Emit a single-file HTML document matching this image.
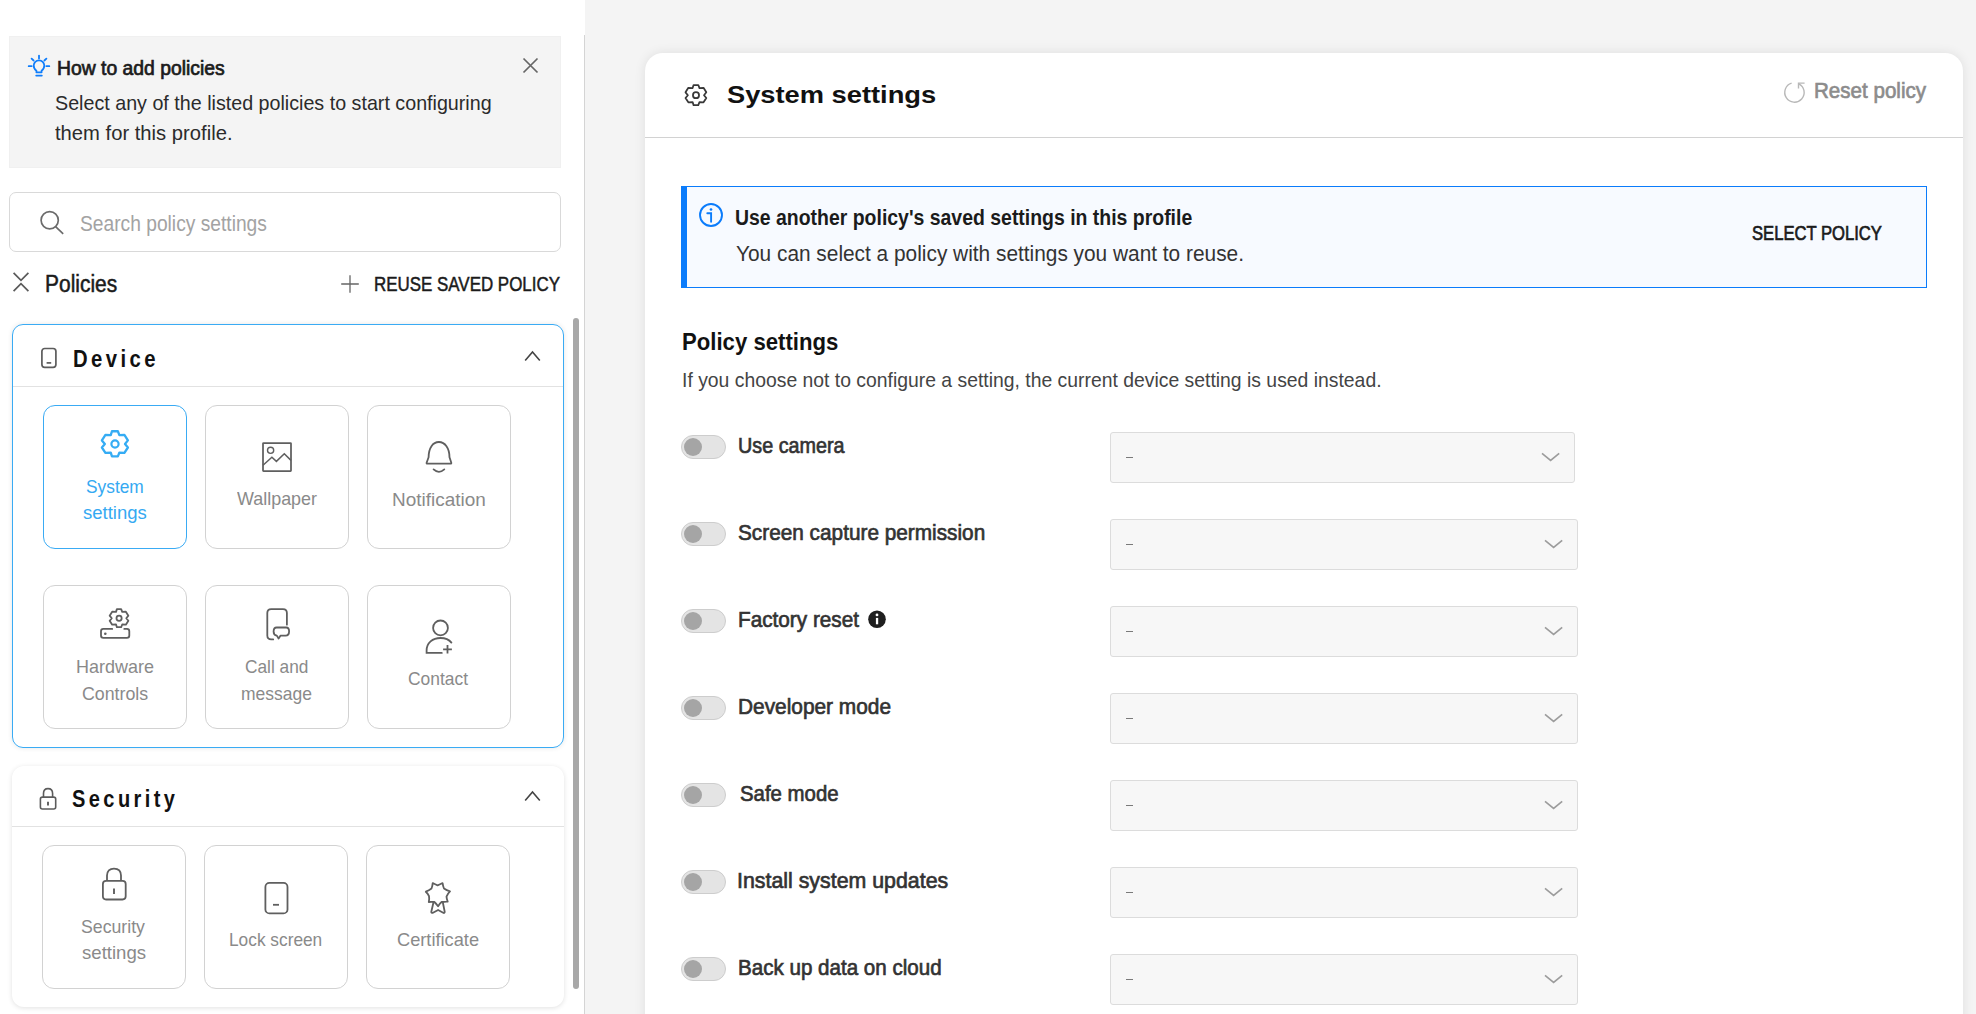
<!DOCTYPE html>
<html><head><meta charset="utf-8"><style>
html,body{margin:0;padding:0}
body{width:1976px;height:1014px;overflow:hidden;position:relative;background:#f4f4f4;font-family:"Liberation Sans",sans-serif}
.abs{position:absolute;box-sizing:content-box}
.ic{position:absolute;overflow:visible}
.t{position:absolute;white-space:nowrap;transform-origin:0 0}
</style></head><body>
<div class="abs" style="left:0;top:0;width:585px;height:1014px;background:#fff"></div>
<div class="abs" style="left:584px;top:35px;width:1px;height:979px;background:#d4d4d4"></div>
<div class="abs" style="left:9px;top:36px;width:552px;height:132px;background:#f4f4f4;box-shadow:inset 0 0 0 1px #f0f0f0"></div>
<svg class="ic" style="left:28px;top:55px;width:22px;height:22px" viewBox="0 0 22 22" ><g fill="none" stroke="#0f7dfb" stroke-width="1.8" stroke-linecap="round" stroke-linejoin="round"><path d="M8.4 17.3V15.7C6.8 14.6 5.7 12.7 5.7 10.6A5.3 5.3 0 0 1 16.3 10.6C16.3 12.7 15.2 14.6 13.6 15.7V17.3Z"/><path d="M8.2 20.6H13.8"/><path d="M11 0.6V3.4M3.6 3.6L5.6 5.5M18.4 3.6L16.4 5.5M0.7 11.2H3.6M18.4 11.2H21.3"/></g></svg>
<svg class="ic" style="left:520px;top:55px;width:22px;height:22px" viewBox="0 0 22 22" ><path d="M3.5 3.5L17.5 17.5M17.5 3.5L3.5 17.5" stroke="#666" stroke-width="1.7" fill="none"/></svg>
<div class="abs" style="left:9px;top:192px;width:550px;height:58px;border:1px solid #d9d9d9;border-radius:7px;background:#fff"></div>
<svg class="ic" style="left:38px;top:209px;width:28px;height:28px" viewBox="0 0 28 28" ><g fill="none" stroke="#6b6b6b" stroke-width="1.7"><circle cx="11.7" cy="11.2" r="8.6"/><path d="M17.6 17.7L25.2 24.8"/></g></svg>
<svg class="ic" style="left:11px;top:270px;width:20px;height:24px" viewBox="0 0 20 24" ><g fill="none" stroke="#5a5a5a" stroke-width="1.7"><path d="M2.6 2.9L10 10.4L17.4 2.9M2.6 21.2L10 13.6L17.4 21.2"/></g></svg>
<svg class="ic" style="left:338px;top:272px;width:24px;height:24px" viewBox="0 0 24 24" ><path d="M12 3.2V20.8M3.2 12H20.8" stroke="#666" stroke-width="1.3" fill="none"/></svg>
<div class="abs card" style="left:12px;top:324px;width:550px;height:422px;border:1px solid #3aabf4;border-radius:11px;box-shadow:0 0 5px rgba(0,0,0,0.10)"></div>
<div class="abs" style="left:13px;top:386px;width:550px;height:1px;background:#e2e2e2"></div>
<svg class="ic" style="left:38px;top:345px;width:22px;height:26px" viewBox="0 0 22 26" ><g fill="none" stroke="#5c5c5c" stroke-width="1.7"><rect x="3.9" y="3.5" width="14" height="18.8" rx="2.8"/><path d="M8.6 17.9H13.2"/></g></svg>
<svg class="ic" style="left:522px;top:346px;width:22px;height:20px" viewBox="0 0 22 20" ><path d="M3.2 14.5L10.5 6L17.8 14.5" stroke="#444" stroke-width="1.6" fill="none"/></svg>
<div class="abs" style="left:43px;top:405px;width:142px;height:142px;border:1px solid #3aabf4;border-radius:12px;background:#fff"></div>
<div class="abs" style="left:205px;top:405px;width:142px;height:142px;border:1px solid #d2d2d2;border-radius:12px;background:#fff"></div>
<div class="abs" style="left:367px;top:405px;width:142px;height:142px;border:1px solid #d2d2d2;border-radius:12px;background:#fff"></div>
<div class="abs" style="left:43px;top:585px;width:142px;height:142px;border:1px solid #d2d2d2;border-radius:12px;background:#fff"></div>
<div class="abs" style="left:205px;top:585px;width:142px;height:142px;border:1px solid #d2d2d2;border-radius:12px;background:#fff"></div>
<div class="abs" style="left:367px;top:585px;width:142px;height:142px;border:1px solid #d2d2d2;border-radius:12px;background:#fff"></div>
<div class="abs card" style="left:12px;top:766px;width:552px;height:241px;border-radius:12px;background:#fff;box-shadow:0 1px 5px rgba(0,0,0,0.12)"></div>
<div class="abs" style="left:12px;top:826px;width:552px;height:1px;background:#e2e2e2"></div>
<div class="abs" style="left:42px;top:845px;width:142px;height:142px;border:1px solid #d2d2d2;border-radius:12px;background:#fff"></div>
<div class="abs" style="left:204px;top:845px;width:142px;height:142px;border:1px solid #d2d2d2;border-radius:12px;background:#fff"></div>
<div class="abs" style="left:366px;top:845px;width:142px;height:142px;border:1px solid #d2d2d2;border-radius:12px;background:#fff"></div>
<div class="abs" style="left:573px;top:318px;width:6px;height:671px;border-radius:3px;background:#a8a8a8"></div>
<svg class="ic" style="left:101px;top:430px;width:28px;height:28px" viewBox="0 0 28 28" ><path d="M10.95 1.27 L16.87 1.27 L18.35 5.10 L23.40 4.80 L26.90 10.40 L24.00 14.00 L26.90 17.50 L23.40 22.90 L18.35 22.60 L16.87 26.40 L10.95 26.40 L9.77 22.60 L4.44 22.90 L0.90 17.50 L3.85 14.00 L0.90 10.40 L4.44 4.80 L9.77 5.10Z" fill="none" stroke="#35acf4" stroke-width="2.3" stroke-linejoin="round"/><circle cx="14" cy="14" r="3.6" fill="none" stroke="#35acf4" stroke-width="2.2"/></svg>
<svg class="ic" style="left:262px;top:442px;width:30px;height:30px" viewBox="0 0 30 30" ><g fill="none" stroke="#5f5f5f" stroke-width="1.75"><rect x="1" y="1" width="28" height="28" rx="0.5"/><circle cx="8.6" cy="8.3" r="3.1" stroke-width="1.4"/><path d="M1 23.2L9.9 15.2L14.4 19.4L22.3 11.7L29 18.4" stroke-width="1.5" stroke-linejoin="miter"/></g></svg>
<svg class="ic" style="left:424px;top:439px;width:30px;height:36px" viewBox="0 0 30 36" ><g fill="none" stroke="#5f5f5f" stroke-width="1.8" stroke-linejoin="round" stroke-linecap="round"><path d="M4.6 18.3C4.6 9 8.8 3 14.9 3C21 3 25.5 9 25.5 18.3L27.3 23.8C27.5 24.4 27.2 24.7 26.6 24.7H3.3C2.7 24.7 2.4 24.4 2.6 23.8Z"/><path d="M9.6 30.4C11 31.7 12.8 32.8 14.9 32.8C17 32.8 18.8 31.7 20.3 30.4"/></g></svg>
<svg class="ic" style="left:98px;top:605px;width:36px;height:36px" viewBox="0 0 36 36" ><g transform="translate(11,3.2) scale(0.72)"><path d="M10.95 1.27 L16.87 1.27 L18.35 5.10 L23.40 4.80 L26.90 10.40 L24.00 14.00 L26.90 17.50 L23.40 22.90 L18.35 22.60 L16.87 26.40 L10.95 26.40 L9.77 22.60 L4.44 22.90 L0.90 17.50 L3.85 14.00 L0.90 10.40 L4.44 4.80 L9.77 5.10Z" fill="none" stroke="#5f5f5f" stroke-width="2.5" stroke-linejoin="round"/><circle cx="14" cy="14" r="3.6" fill="none" stroke="#5f5f5f" stroke-width="2.5"/></g><g fill="none" stroke="#5f5f5f" stroke-width="1.8" stroke-linecap="round"><path d="M14.2 23.9H5.3C3.6 23.9 3 24.6 3 26.3V30.6C3 32.3 3.6 32.9 5.3 32.9H29C30.7 32.9 31.3 32.3 31.3 30.6V26.3C31.3 24.6 30.7 23.9 29 23.9H26.3"/></g><circle cx="7.3" cy="28.8" r="1.3" fill="#5f5f5f"/></svg>
<svg class="ic" style="left:264px;top:606px;width:30px;height:36px" viewBox="0 0 30 36" ><g fill="none" stroke="#5f5f5f" stroke-width="1.8" stroke-linecap="round" stroke-linejoin="round"><path d="M9.2 33.4H7.2C4.7 33.4 3.3 32 3.3 29.5V7.1C3.3 4.6 4.7 3.2 7.2 3.2H19C21.5 3.2 22.9 4.6 22.9 7.1V18.7"/><path d="M12.6 21.5H22.2C24.1 21.5 25.1 23 25.1 25.3C25.1 27.6 23.9 29.6 21.6 29.6H16.6L14.6 32.6L12.8 29.6C10.7 29.2 9.6 27.6 9.6 25.4C9.6 23.1 10.6 21.5 12.6 21.5Z"/></g></svg>
<svg class="ic" style="left:424px;top:617px;width:30px;height:38px" viewBox="0 0 30 38" ><g fill="none" stroke="#5f5f5f" stroke-width="1.8" stroke-linecap="round"><circle cx="16.5" cy="10.9" r="7.4"/><path d="M17.8 35.9H2.6V33.5C2.6 26 8.6 21 16.5 21C21.3 21 25 22.5 27.4 25.6"/><path d="M19.1 32.4H27.9M23.5 28V36.6" stroke-linecap="butt"/></g></svg>
<svg class="ic" style="left:99px;top:865px;width:30px;height:38px" viewBox="0 0 30 38" ><g fill="none" stroke="#5f5f5f" stroke-width="1.8"><rect x="3.9" y="15.9" width="22.8" height="18.6" rx="3.2"/><path d="M8 15.9V10.6C8 6.3 10.6 3.6 15 3.6C19.4 3.6 22 6.3 22 10.6V15.9"/><path d="M15 23.4V28.9" stroke-width="1.9"/></g></svg>
<svg class="ic" style="left:262px;top:880px;width:28px;height:36px" viewBox="0 0 28 36" ><g fill="none" stroke="#5f5f5f" stroke-width="1.8"><rect x="3.4" y="2.9" width="22.1" height="30.5" rx="4"/><path d="M11 24.8H17"/></g></svg>
<svg class="ic" style="left:412px;top:870px;width:50px;height:50px" viewBox="0 0 50 50" ><g fill="none" stroke="#5f5f5f" stroke-width="1.8" stroke-linejoin="round" stroke-linecap="round"><path d="M20.7 13.1Q23.2 14.6 25.6 15.3Q28.1 14.6 30.6 13.1Q31 16.2 32 18.5Q34.6 20.3 38 21.4Q35.7 23.6 34.5 26.6Q34.7 29.2 35.7 31.6Q32.5 31.5 29.6 32Q27.5 33.8 26.1 36.2Q24.4 33.8 22.4 32Q19.5 31.6 16.8 32Q17.5 29.1 17 26.1Q16.1 23.6 13.8 21.7Q17.1 20.4 19.5 18.5Q20.5 15.9 20.7 13.1Z"/><path d="M21.5 32.3L19.3 41.8C19.2 42.8 20 43.2 21 42.7L26.1 40L31.2 42.8C32.2 43.3 32.9 42.7 32.7 41.8L30.8 32.3"/></g></svg>
<svg class="ic" style="left:37px;top:786px;width:22px;height:26px" viewBox="0 0 22 26" ><g fill="none" stroke="#5c5c5c" stroke-width="1.6"><rect x="3.4" y="11.1" width="15.3" height="11.9" rx="2"/><path d="M6.5 11.1V7.4C6.5 4.4 8.2 2.6 11 2.6C13.8 2.6 15.6 4.4 15.6 7.4V11.1"/><path d="M11 15.8V19.6" stroke-width="1.9"/></g></svg>
<svg class="ic" style="left:522px;top:786px;width:22px;height:20px" viewBox="0 0 22 20" ><path d="M3.2 14.5L10.5 6L17.8 14.5" stroke="#444" stroke-width="1.6" fill="none"/></svg>
<div class="abs" style="left:645px;top:53px;width:1318px;height:1000px;background:#fff;border-radius:18px;box-shadow:0 0 12px rgba(0,0,0,0.09)"></div>
<div class="abs" style="left:645px;top:137px;width:1318px;height:1px;background:#d2d2d2"></div>
<svg class="ic" style="left:682px;top:82px;width:28px;height:26px" viewBox="0 0 28 26" ><g transform="translate(2.8,2) scale(0.8)"><path d="M10.95 1.27 L16.87 1.27 L18.35 5.10 L23.40 4.80 L26.90 10.40 L24.00 14.00 L26.90 17.50 L23.40 22.90 L18.35 22.60 L16.87 26.40 L10.95 26.40 L9.77 22.60 L4.44 22.90 L0.90 17.50 L3.85 14.00 L0.90 10.40 L4.44 4.80 L9.77 5.10Z" fill="none" stroke="#383838" stroke-width="2.2" stroke-linejoin="round"/><circle cx="14" cy="14" r="3.8" fill="none" stroke="#383838" stroke-width="2.2"/></g></svg>
<svg class="ic" style="left:1780px;top:76px;width:32px;height:32px" viewBox="0 0 32 32" ><g fill="none" stroke="#b8b8b8" stroke-width="1.4"><path d="M11.6 7.2A9.7 9.7 0 1 0 18.8 7.8"/><path d="M24.6 7.1H18.5V12.6"/></g></svg>
<div class="abs" style="left:681px;top:186px;width:1239px;height:100px;background:#f7faff;border:1px solid #0b7cfb;border-left:6px solid #0b7cfb"></div>
<svg class="ic" style="left:697px;top:201px;width:28px;height:28px" viewBox="0 0 28 28" ><g fill="none" stroke="#0b7cfb" stroke-width="1.9"><circle cx="14" cy="14" r="11"/><path d="M10.3 12.3H14.1V20.7" stroke-linecap="round"/></g><circle cx="14" cy="8.5" r="1.35" fill="#0b7cfb"/></svg>
<div class="abs" style="left:681px;top:435px;width:43px;height:22px;border:1px solid #cdcdcd;border-radius:12px;background:#e4e4e4"></div>
<div class="abs" style="left:684px;top:438px;width:18px;height:18px;border-radius:50%;background:#a5a5a5"></div>
<div class="abs" style="left:1110px;top:432px;width:463px;height:49px;border:1px solid #dcdcdc;border-radius:3px;background:#f7f7f7"></div>
<div class="abs" style="left:1126px;top:457px;width:7px;height:1.4px;background:#7a7a7a"></div>
<svg class="ic" style="left:1540px;top:450px;width:22px;height:14px" viewBox="0 0 22 14" ><path d="M2 3.3L10.6 10.4L19.2 3.3" stroke="#9c9c9c" stroke-width="1.6" fill="none"/></svg>
<div class="abs" style="left:681px;top:522px;width:43px;height:22px;border:1px solid #cdcdcd;border-radius:12px;background:#e4e4e4"></div>
<div class="abs" style="left:684px;top:525px;width:18px;height:18px;border-radius:50%;background:#a5a5a5"></div>
<div class="abs" style="left:1110px;top:519px;width:466px;height:49px;border:1px solid #dcdcdc;border-radius:3px;background:#f7f7f7"></div>
<div class="abs" style="left:1126px;top:544px;width:7px;height:1.4px;background:#7a7a7a"></div>
<svg class="ic" style="left:1543px;top:537px;width:22px;height:14px" viewBox="0 0 22 14" ><path d="M2 3.3L10.6 10.4L19.2 3.3" stroke="#9c9c9c" stroke-width="1.6" fill="none"/></svg>
<div class="abs" style="left:681px;top:609px;width:43px;height:22px;border:1px solid #cdcdcd;border-radius:12px;background:#e4e4e4"></div>
<div class="abs" style="left:684px;top:612px;width:18px;height:18px;border-radius:50%;background:#a5a5a5"></div>
<div class="abs" style="left:1110px;top:606px;width:466px;height:49px;border:1px solid #dcdcdc;border-radius:3px;background:#f7f7f7"></div>
<div class="abs" style="left:1126px;top:631px;width:7px;height:1.4px;background:#7a7a7a"></div>
<svg class="ic" style="left:1543px;top:624px;width:22px;height:14px" viewBox="0 0 22 14" ><path d="M2 3.3L10.6 10.4L19.2 3.3" stroke="#9c9c9c" stroke-width="1.6" fill="none"/></svg>
<div class="abs" style="left:681px;top:696px;width:43px;height:22px;border:1px solid #cdcdcd;border-radius:12px;background:#e4e4e4"></div>
<div class="abs" style="left:684px;top:699px;width:18px;height:18px;border-radius:50%;background:#a5a5a5"></div>
<div class="abs" style="left:1110px;top:693px;width:466px;height:49px;border:1px solid #dcdcdc;border-radius:3px;background:#f7f7f7"></div>
<div class="abs" style="left:1126px;top:718px;width:7px;height:1.4px;background:#7a7a7a"></div>
<svg class="ic" style="left:1543px;top:711px;width:22px;height:14px" viewBox="0 0 22 14" ><path d="M2 3.3L10.6 10.4L19.2 3.3" stroke="#9c9c9c" stroke-width="1.6" fill="none"/></svg>
<div class="abs" style="left:681px;top:783px;width:43px;height:22px;border:1px solid #cdcdcd;border-radius:12px;background:#e4e4e4"></div>
<div class="abs" style="left:684px;top:786px;width:18px;height:18px;border-radius:50%;background:#a5a5a5"></div>
<div class="abs" style="left:1110px;top:780px;width:466px;height:49px;border:1px solid #dcdcdc;border-radius:3px;background:#f7f7f7"></div>
<div class="abs" style="left:1126px;top:805px;width:7px;height:1.4px;background:#7a7a7a"></div>
<svg class="ic" style="left:1543px;top:798px;width:22px;height:14px" viewBox="0 0 22 14" ><path d="M2 3.3L10.6 10.4L19.2 3.3" stroke="#9c9c9c" stroke-width="1.6" fill="none"/></svg>
<div class="abs" style="left:681px;top:870px;width:43px;height:22px;border:1px solid #cdcdcd;border-radius:12px;background:#e4e4e4"></div>
<div class="abs" style="left:684px;top:873px;width:18px;height:18px;border-radius:50%;background:#a5a5a5"></div>
<div class="abs" style="left:1110px;top:867px;width:466px;height:49px;border:1px solid #dcdcdc;border-radius:3px;background:#f7f7f7"></div>
<div class="abs" style="left:1126px;top:892px;width:7px;height:1.4px;background:#7a7a7a"></div>
<svg class="ic" style="left:1543px;top:885px;width:22px;height:14px" viewBox="0 0 22 14" ><path d="M2 3.3L10.6 10.4L19.2 3.3" stroke="#9c9c9c" stroke-width="1.6" fill="none"/></svg>
<div class="abs" style="left:681px;top:957px;width:43px;height:22px;border:1px solid #cdcdcd;border-radius:12px;background:#e4e4e4"></div>
<div class="abs" style="left:684px;top:960px;width:18px;height:18px;border-radius:50%;background:#a5a5a5"></div>
<div class="abs" style="left:1110px;top:954px;width:466px;height:49px;border:1px solid #dcdcdc;border-radius:3px;background:#f7f7f7"></div>
<div class="abs" style="left:1126px;top:979px;width:7px;height:1.4px;background:#7a7a7a"></div>
<svg class="ic" style="left:1543px;top:972px;width:22px;height:14px" viewBox="0 0 22 14" ><path d="M2 3.3L10.6 10.4L19.2 3.3" stroke="#9c9c9c" stroke-width="1.6" fill="none"/></svg>
<svg class="ic" style="left:866px;top:608px;width:22px;height:22px" viewBox="0 0 22 22" ><circle cx="11" cy="11.2" r="8.8" fill="#1f1f1f"/><circle cx="11" cy="6.9" r="1.4" fill="#fff"/><rect x="9.9" y="9.9" width="2.3" height="6.4" fill="#fff"/></svg>
<div class="t" style="left:57.31px;top:56.01px;font-size:19.6px;line-height:24px;font-weight:400;-webkit-text-stroke:0.7px #1b1b1b;color:#1b1b1b;letter-spacing:0px;transform:scaleX(0.9864)">How to add policies</div>
<div class="t" style="left:54.60px;top:90.06px;font-size:20.6px;line-height:25px;font-weight:400;color:#2b2b2b;letter-spacing:0px;transform:scaleX(0.9560)">Select any of the listed policies to start configuring</div>
<div class="t" style="left:54.60px;top:119.96px;font-size:20.6px;line-height:25px;font-weight:400;color:#2b2b2b;letter-spacing:0px;transform:scaleX(0.9815)">them for this profile.</div>
<div class="t" style="left:79.50px;top:210.52px;font-size:21.6px;line-height:26px;font-weight:400;color:#a3a3a3;letter-spacing:0px;transform:scaleX(0.8899)">Search policy settings</div>
<div class="t" style="left:45.09px;top:269.80px;font-size:23.1px;line-height:28px;font-weight:400;-webkit-text-stroke:0.5px #1b1b1b;color:#1b1b1b;letter-spacing:0px;transform:scaleX(0.9073)">Policies</div>
<div class="t" style="left:374.07px;top:271.97px;font-size:20.3px;line-height:24px;font-weight:400;-webkit-text-stroke:0.5px #1b1b1b;color:#1b1b1b;letter-spacing:0px;transform:scaleX(0.8346)">REUSE SAVED POLICY</div>
<div class="t" style="left:73.48px;top:344.44px;font-size:24.7px;line-height:30px;font-weight:700;color:#111111;letter-spacing:4.2px;transform:scaleX(0.8212)">Device</div>
<div class="t" style="left:86.00px;top:475.66px;font-size:18.6px;line-height:22px;font-weight:400;color:#35a9f2;letter-spacing:0px;transform:scaleX(0.9317)">System</div>
<div class="t" style="left:83.20px;top:502.06px;font-size:18.6px;line-height:22px;font-weight:400;color:#35a9f2;letter-spacing:0px;transform:scaleX(0.9956)">settings</div>
<div class="t" style="left:237.10px;top:488.36px;font-size:18.6px;line-height:22px;font-weight:400;color:#8a8a8a;letter-spacing:0px;transform:scaleX(0.9635)">Wallpaper</div>
<div class="t" style="left:391.58px;top:488.56px;font-size:18.6px;line-height:22px;font-weight:400;color:#8a8a8a;letter-spacing:0px;transform:scaleX(1.0194)">Notification</div>
<div class="t" style="left:75.83px;top:655.86px;font-size:18.6px;line-height:22px;font-weight:400;color:#8a8a8a;letter-spacing:0px;transform:scaleX(0.9664)">Hardware</div>
<div class="t" style="left:82.00px;top:682.86px;font-size:18.6px;line-height:22px;font-weight:400;color:#8a8a8a;letter-spacing:0px;transform:scaleX(0.9559)">Controls</div>
<div class="t" style="left:245.40px;top:655.56px;font-size:18.6px;line-height:22px;font-weight:400;color:#8a8a8a;letter-spacing:0px;transform:scaleX(0.9296)">Call and</div>
<div class="t" style="left:241.36px;top:682.56px;font-size:18.6px;line-height:22px;font-weight:400;color:#8a8a8a;letter-spacing:0px;transform:scaleX(0.9392)">message</div>
<div class="t" style="left:408.40px;top:668.26px;font-size:18.6px;line-height:22px;font-weight:400;color:#8a8a8a;letter-spacing:0px;transform:scaleX(0.9366)">Contact</div>
<div class="t" style="left:72.30px;top:784.14px;font-size:24.7px;line-height:30px;font-weight:700;color:#111111;letter-spacing:4.2px;transform:scaleX(0.8120)">Security</div>
<div class="t" style="left:81.40px;top:915.66px;font-size:18.6px;line-height:22px;font-weight:400;color:#8a8a8a;letter-spacing:0px;transform:scaleX(0.9518)">Security</div>
<div class="t" style="left:82.00px;top:942.06px;font-size:18.6px;line-height:22px;font-weight:400;color:#8a8a8a;letter-spacing:0px;transform:scaleX(1.0003)">settings</div>
<div class="t" style="left:228.97px;top:929.36px;font-size:18.6px;line-height:22px;font-weight:400;color:#8a8a8a;letter-spacing:0px;transform:scaleX(0.9301)">Lock screen</div>
<div class="t" style="left:397.20px;top:929.36px;font-size:18.6px;line-height:22px;font-weight:400;color:#8a8a8a;letter-spacing:0px;transform:scaleX(0.9801)">Certificate</div>
<div class="t" style="left:726.50px;top:80.08px;font-size:24.6px;line-height:30px;font-weight:700;color:#111111;letter-spacing:0px;transform:scaleX(1.1089)">System settings</div>
<div class="t" style="left:1813.80px;top:77.30px;font-size:22.8px;line-height:27px;font-weight:400;-webkit-text-stroke:0.7px #8c8c8c;color:#8c8c8c;letter-spacing:0px;transform:scaleX(0.9025)">Reset policy</div>
<div class="t" style="left:735.15px;top:203.50px;font-size:22.8px;line-height:27px;font-weight:700;color:#1b1b1b;letter-spacing:0px;transform:scaleX(0.8527)">Use another policy&#x27;s saved settings in this profile</div>
<div class="t" style="left:735.60px;top:240.95px;font-size:21.2px;line-height:25px;font-weight:400;color:#333333;letter-spacing:0px;transform:scaleX(0.9839)">You can select a policy with settings you want to reuse.</div>
<div class="t" style="left:1752.10px;top:220.90px;font-size:20.2px;line-height:24px;font-weight:400;-webkit-text-stroke:0.7px #1b1b1b;color:#1b1b1b;letter-spacing:0px;transform:scaleX(0.8234)">SELECT POLICY</div>
<div class="t" style="left:681.79px;top:326.98px;font-size:24.3px;line-height:29px;font-weight:700;color:#111111;letter-spacing:0px;transform:scaleX(0.9114)">Policy settings</div>
<div class="t" style="left:681.78px;top:367.09px;font-size:21.1px;line-height:25px;font-weight:400;color:#444444;letter-spacing:0px;transform:scaleX(0.9178)">If you choose not to configure a setting, the current device setting is used instead.</div>
<div class="t" style="left:738.33px;top:432.33px;font-size:22.7px;line-height:27px;font-weight:400;-webkit-text-stroke:0.7px #333333;color:#333333;letter-spacing:0px;transform:scaleX(0.8711)">Use camera</div>
<div class="t" style="left:737.88px;top:519.33px;font-size:22.7px;line-height:27px;font-weight:400;-webkit-text-stroke:0.7px #333333;color:#333333;letter-spacing:0px;transform:scaleX(0.9160)">Screen capture permission</div>
<div class="t" style="left:737.89px;top:606.33px;font-size:22.7px;line-height:27px;font-weight:400;-webkit-text-stroke:0.7px #333333;color:#333333;letter-spacing:0px;transform:scaleX(0.9139)">Factory reset</div>
<div class="t" style="left:737.88px;top:693.33px;font-size:22.7px;line-height:27px;font-weight:400;-webkit-text-stroke:0.7px #333333;color:#333333;letter-spacing:0px;transform:scaleX(0.9190)">Developer mode</div>
<div class="t" style="left:740.30px;top:780.03px;font-size:22.7px;line-height:27px;font-weight:400;-webkit-text-stroke:0.7px #333333;color:#333333;letter-spacing:0px;transform:scaleX(0.8982)">Safe mode</div>
<div class="t" style="left:736.92px;top:867.23px;font-size:22.7px;line-height:27px;font-weight:400;-webkit-text-stroke:0.7px #333333;color:#333333;letter-spacing:0px;transform:scaleX(0.9409)">Install system updates</div>
<div class="t" style="left:737.89px;top:954.33px;font-size:22.7px;line-height:27px;font-weight:400;-webkit-text-stroke:0.7px #333333;color:#333333;letter-spacing:0px;transform:scaleX(0.9067)">Back up data on cloud</div>
</body></html>
